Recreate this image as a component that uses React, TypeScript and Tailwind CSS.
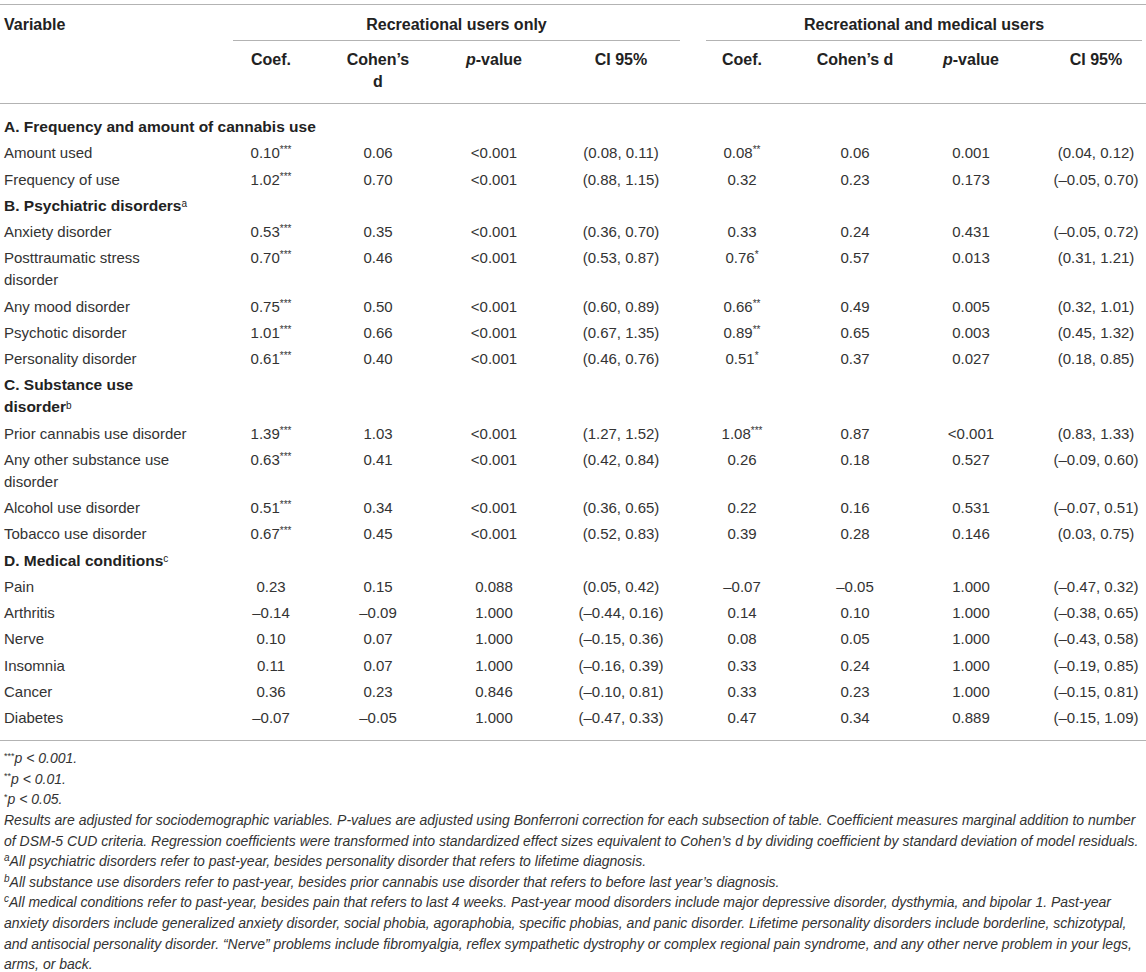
import React from "react";

type Row =
  | { section: string; sup?: string }
  | { label: string; v: [string, string, string, string, string, string, string, string] };

const rows: Row[] = [
  { section: "A. Frequency and amount of cannabis use" },
  { label: "Amount used", v: ["0.10***", "0.06", "<0.001", "(0.08, 0.11)", "0.08**", "0.06", "0.001", "(0.04, 0.12)"] },
  { label: "Frequency of use", v: ["1.02***", "0.70", "<0.001", "(0.88, 1.15)", "0.32", "0.23", "0.173", "(–0.05, 0.70)"] },
  { section: "B. Psychiatric disorders", sup: "a" },
  { label: "Anxiety disorder", v: ["0.53***", "0.35", "<0.001", "(0.36, 0.70)", "0.33", "0.24", "0.431", "(–0.05, 0.72)"] },
  { label: "Posttraumatic stress disorder", v: ["0.70***", "0.46", "<0.001", "(0.53, 0.87)", "0.76*", "0.57", "0.013", "(0.31, 1.21)"] },
  { label: "Any mood disorder", v: ["0.75***", "0.50", "<0.001", "(0.60, 0.89)", "0.66**", "0.49", "0.005", "(0.32, 1.01)"] },
  { label: "Psychotic disorder", v: ["1.01***", "0.66", "<0.001", "(0.67, 1.35)", "0.89**", "0.65", "0.003", "(0.45, 1.32)"] },
  { label: "Personality disorder", v: ["0.61***", "0.40", "<0.001", "(0.46, 0.76)", "0.51*", "0.37", "0.027", "(0.18, 0.85)"] },
  { section: "C. Substance use disorder", sup: "b" },
  { label: "Prior cannabis use disorder", v: ["1.39***", "1.03", "<0.001", "(1.27, 1.52)", "1.08***", "0.87", "<0.001", "(0.83, 1.33)"] },
  { label: "Any other substance use disorder", v: ["0.63***", "0.41", "<0.001", "(0.42, 0.84)", "0.26", "0.18", "0.527", "(–0.09, 0.60)"] },
  { label: "Alcohol use disorder", v: ["0.51***", "0.34", "<0.001", "(0.36, 0.65)", "0.22", "0.16", "0.531", "(–0.07, 0.51)"] },
  { label: "Tobacco use disorder", v: ["0.67***", "0.45", "<0.001", "(0.52, 0.83)", "0.39", "0.28", "0.146", "(0.03, 0.75)"] },
  { section: "D. Medical conditions", sup: "c" },
  { label: "Pain", v: ["0.23", "0.15", "0.088", "(0.05, 0.42)", "–0.07", "–0.05", "1.000", "(–0.47, 0.32)"] },
  { label: "Arthritis", v: ["–0.14", "–0.09", "1.000", "(–0.44, 0.16)", "0.14", "0.10", "1.000", "(–0.38, 0.65)"] },
  { label: "Nerve", v: ["0.10", "0.07", "1.000", "(–0.15, 0.36)", "0.08", "0.05", "1.000", "(–0.43, 0.58)"] },
  { label: "Insomnia", v: ["0.11", "0.07", "1.000", "(–0.16, 0.39)", "0.33", "0.24", "1.000", "(–0.19, 0.85)"] },
  { label: "Cancer", v: ["0.36", "0.23", "0.846", "(–0.10, 0.81)", "0.33", "0.23", "1.000", "(–0.15, 0.81)"] },
  { label: "Diabetes", v: ["–0.07", "–0.05", "1.000", "(–0.47, 0.33)", "0.47", "0.34", "0.889", "(–0.15, 1.09)"] },
];

function Value({ text }: { text: string }) {
  const m = text.match(/^(.*?)(\*+)$/);
  if (!m) return <>{text}</>;
  return (
    <>
      {m[1]}
      <sup className="text-[10px]">{m[2]}</sup>
    </>
  );
}

const grid =
  "grid grid-cols-[226px_90px_124px_108px_146px_96px_130px_102px_124px]";

export default function App() {
  return (
    <div
      className="w-[1146px] bg-white pt-1 text-[#333]"
      style={{ fontFamily: '"Liberation Sans", Arial, Helvetica, sans-serif' }}
    >
      {/* header */}
      <div className={`${grid} border-t border-[#b3b3b3] text-[16px] font-bold text-[#222] leading-[22px]`}>
        <div className="row-span-2 pl-1 pt-[9px]">Variable</div>
        <div className="col-span-4">
          <div className="ml-[7px] mr-[14px] border-b border-[#b3b3b3] pt-[9px] pb-[4px] text-center">
            Recreational users only
          </div>
        </div>
        <div className="col-span-4">
          <div className="ml-[12px] mr-[4px] border-b border-[#b3b3b3] pt-[9px] pb-[4px] text-center">
            Recreational and medical users
          </div>
        </div>
        <div className="pt-2 pb-[10px] text-center">Coef.</div>
        <div className="pt-2 pb-[10px] text-center">
          Cohen’s
          <br />d
        </div>
        <div className="pt-2 pb-[10px] text-center">
          <i>p</i>-value
        </div>
        <div className="pt-2 pb-[10px] text-center">CI 95%</div>
        <div className="pt-2 pb-[10px] text-center">Coef.</div>
        <div className="pt-2 pb-[10px] text-center">Cohen’s d</div>
        <div className="pt-2 pb-[10px] text-center">
          <i>p</i>-value
        </div>
        <div className="pt-2 pb-[10px] pl-6 text-center">CI 95%</div>
      </div>

      {/* body */}
      <div className={`${grid} border-t border-[#b3b3b3] border-b pt-[10px] pb-[9px] text-[15px] leading-[22px]`}>
        {rows.map((r, i) =>
          "section" in r ? (
            <div key={i} className="col-span-9 grid grid-cols-[226px_1fr] py-[2.125px] text-[15.5px] font-bold text-[#222]">
              <div className={r.sup ? "pl-1 pr-[30px]" : "col-span-2 pl-1"}>
                {r.section}
                {r.sup && <sup className="top-[-0.35em] text-[10px] font-normal">{r.sup}</sup>}
              </div>
            </div>
          ) : (
            <React.Fragment key={i}>
              <div className="pl-1 pr-[30px] py-[2.125px]">{r.label}</div>
              {r.v.map((val, j) => (
                <div key={j} className={`py-[2.125px] text-center ${j === 7 ? "pl-6" : ""}`}>
                  <Value text={val} />
                </div>
              ))}
            </React.Fragment>
          )
        )}
      </div>

      {/* footnotes */}
      <div className="pl-1 pt-[7px] text-[14px] italic leading-[20.6px] text-[#333] whitespace-nowrap">
        <div>
          <sup className="not-italic text-[9px]">***</sup>p &lt; 0.001.
        </div>
        <div>
          <sup className="not-italic text-[9px]">**</sup>p &lt; 0.01.
        </div>
        <div>
          <sup className="not-italic text-[9px]">*</sup>p &lt; 0.05.
        </div>
        <div>
          Results are adjusted for sociodemographic variables. P-values are adjusted using Bonferroni correction for each subsection of table. Coefficient measures marginal addition to number
        </div>
        <div>
          of DSM-5 CUD criteria. Regression coefficients were transformed into standardized effect sizes equivalent to Cohen’s d by dividing coefficient by standard deviation of model residuals.
        </div>
        <div>
          <sup className="text-[10px]">a</sup>All psychiatric disorders refer to past-year, besides personality disorder that refers to lifetime diagnosis.
        </div>
        <div>
          <sup className="text-[10px]">b</sup>All substance use disorders refer to past-year, besides prior cannabis use disorder that refers to before last year’s diagnosis.
        </div>
        <div>
          <sup className="text-[10px]">c</sup>All medical conditions refer to past-year, besides pain that refers to last 4 weeks. Past-year mood disorders include major depressive disorder, dysthymia, and bipolar 1. Past-year
        </div>
        <div>
          anxiety disorders include generalized anxiety disorder, social phobia, agoraphobia, specific phobias, and panic disorder. Lifetime personality disorders include borderline, schizotypal,
        </div>
        <div>
          and antisocial personality disorder. “Nerve” problems include fibromyalgia, reflex sympathetic dystrophy or complex regional pain syndrome, and any other nerve problem in your legs,
        </div>
        <div>arms, or back.</div>
      </div>
    </div>
  );
}
